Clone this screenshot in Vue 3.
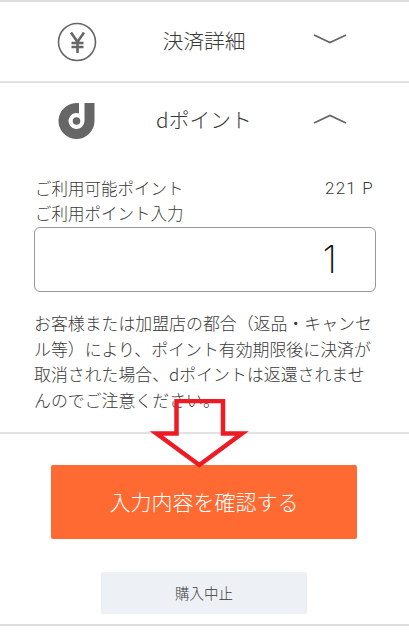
<script setup>
const note = 'お客様または加盟店の都合（返品・キャンセル等）により、ポイント有効期限後に決済が取消された場合、dポイントは返還されませんのでご注意ください。'
</script>

<template>
  <main class="page">
    <section class="row row-first">
      <span class="icon-cell">
        <svg class="icon" width="42" height="42" viewBox="0 0 42 42">
          <circle cx="21" cy="21" r="18.500" fill="none" stroke="#666" stroke-width="1.600" />
          <path d="M15 11.500 21.500 21l6.500-9.500M21.500 21v11M15.500 22h12M15.500 26h12" fill="none" stroke="#666" stroke-width="2.600" />
        </svg>
      </span>
      <span class="title">決済詳細</span>
      <span class="chevron-cell">
        <svg width="34" height="12" viewBox="0 0 34 12">
          <path d="M1 2 17 9.500 33 2" fill="none" stroke="#666" stroke-width="1.800" />
        </svg>
      </span>
    </section>

    <section class="row row-second">
      <span class="icon-cell">
        <svg class="icon" width="38" height="38" viewBox="0 0 38 38">
          <path fill="#666" d="M36.500 1V19A18 18 0 1 1 21 1.200V11.400A8 8 0 1 0 26.500 19V1z" />
          <circle cx="18.500" cy="19" r="3.800" fill="#666" />
        </svg>
      </span>
      <span class="title">dポイント</span>
      <span class="chevron-cell">
        <svg width="34" height="12" viewBox="0 0 34 12">
          <path d="M1 10 17 2.500 33 10" fill="none" stroke="#666" stroke-width="1.800" />
        </svg>
      </span>
    </section>

    <section class="points">
      <div class="available">
        <span>ご利用可能ポイント</span>
        <span class="balance">221 P</span>
      </div>
      <div class="label">ご利用ポイント入力</div>
      <div class="input">1</div>
      <p class="note">{{ note }}</p>
    </section>

    <section class="actions">
      <button class="confirm" type="button">入力内容を確認する</button>
      <button class="cancel" type="button">購入中止</button>
      <svg class="arrow" width="104" height="76" viewBox="0 0 104 76">
        <path d="M29.500 2H76V34.500H95L52.300 66 9.500 34.500H29.500z" fill="none" stroke="#ed1c24" stroke-width="4.500" />
      </svg>
    </section>
  </main>
</template>

<style scoped>
.page {
  box-sizing: border-box;
  width: 409px;
  height: 634px;
  overflow: hidden;
  background: #fff;
  color: #3a3a3a;
  font-family: "Noto Sans CJK JP", "Noto Sans", sans-serif;
  font-weight: 300;
}
.row {
  display: grid;
  grid-template-columns: 154px 100px 1fr;
  align-items: center;
  box-sizing: border-box;
}
.row-first {
  height: 81px;
  border-top: 2px solid #ddd;
}
.row-second {
  height: 80px;
  padding-bottom: 2px;
  border-top: 2px solid #e2e2e2;
}
.icon-cell {
  display: flex;
  justify-content: center;
}
.title {
  padding-bottom: 4px;
  font-size: 20.800px;
  line-height: 28px;
  text-align: center;
  white-space: nowrap;
}
.chevron-cell {
  display: flex;
  padding: 0 0 5px 59px;
}
.points {
  box-sizing: border-box;
  height: 271px;
  padding: 15px 33px 0 34px;
}
.available {
  display: flex;
  justify-content: space-between;
  padding: 0 2px 0 1px;
}
.available,
.label {
  font-size: 16.500px;
  line-height: 25px;
  white-space: nowrap;
}
.balance {
  font-family: "Roboto", sans-serif;
  font-size: 17px;
  font-weight: 300;
  letter-spacing: 1.200px;
}
.label {
  padding-left: 1px;
}
.input {
  box-sizing: border-box;
  height: 65px;
  margin-top: 1px;
  padding-right: 38px;
  border: 1px solid #999;
  border-radius: 6px;
  color: #111;
  font-family: "Inter", sans-serif;
  font-size: 38px;
  font-weight: 200;
  line-height: 63px;
  text-align: right;
}
.note {
  margin: 18px 0 0;
  font-size: 16.900px;
  line-height: 25.700px;
}
.actions {
  position: relative;
  box-sizing: border-box;
  height: 194px;
  border-top: 2px solid #e2e2e2;
  border-bottom: 2px solid #ddd;
  padding-top: 31px;
}
.confirm,
.cancel {
  display: block;
  border: 0;
  border-radius: 2px;
  font-family: inherit;
  font-weight: 300;
}
.confirm {
  width: 306px;
  height: 74px;
  margin-left: 51px;
  padding: 0 0 3px;
  background: #ff6a33;
  color: #fff;
  font-size: 21px;
}
.cancel {
  width: 206px;
  height: 42px;
  margin: 33px 0 0 101px;
  padding: 0 0 2px;
  background: #edf1f6;
  color: #3a3a3a;
  font-size: 14.500px;
}
.arrow {
  position: absolute;
  left: 147px;
  top: -35px;
}
</style>
